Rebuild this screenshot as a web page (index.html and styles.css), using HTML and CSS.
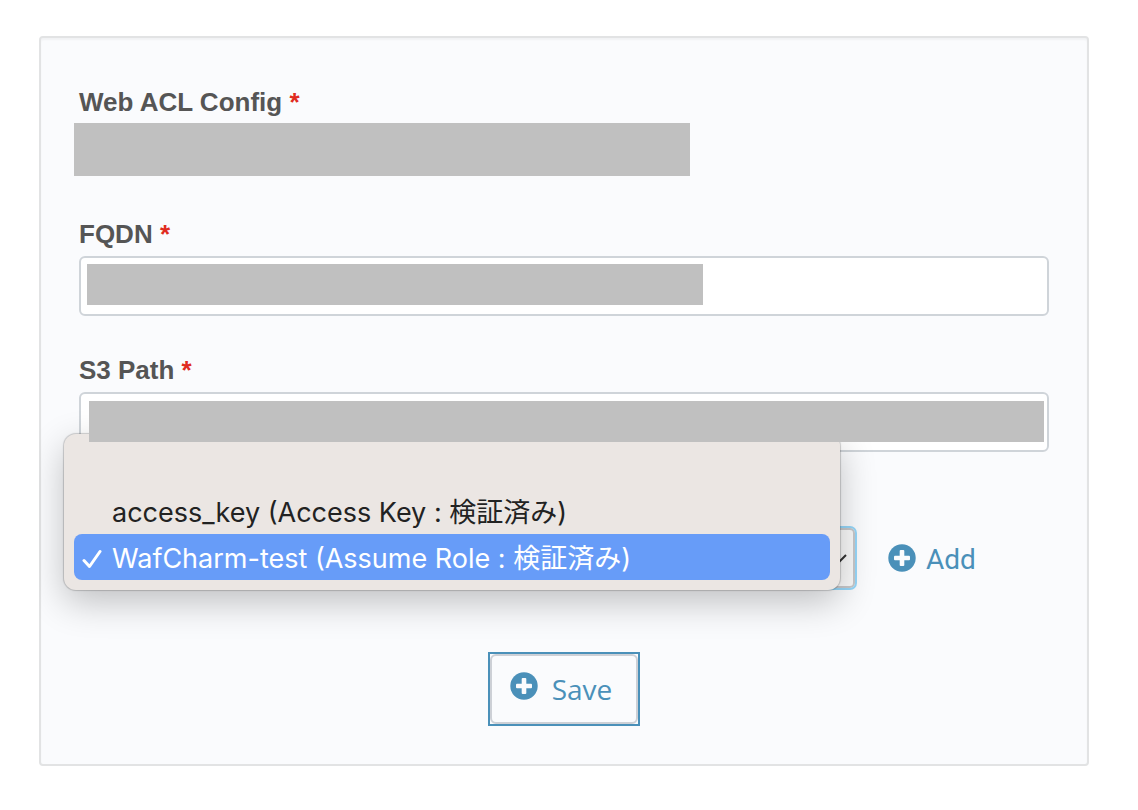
FILE: index.html
```
<!DOCTYPE html>
<html lang="ja">

<head>
    <meta charset="UTF-8">
    <meta name="viewport" content="width=device-width, initial-scale=1.0">
    <title>Web ACL Config</title>
    <link rel="stylesheet" href="styles.css">
</head>

<body>
    <form class="card">
        <div class="field">
            <div class="label">Web ACL Config <span class="required">*</span></div>
            <div class="masked-value"></div>
        </div>

        <div class="field">
            <label class="label" for="fqdn">FQDN <span class="required">*</span></label>
            <div class="control">
                <input type="text" id="fqdn" required>
                <span class="mask mask-fqdn"></span>
            </div>
        </div>

        <div class="field">
            <label class="label" for="s3-path">S3 Path <span class="required">*</span></label>
            <div class="control">
                <input type="text" id="s3-path" required>
                <span class="mask mask-path"></span>
            </div>
        </div>

        <div class="credential">
            <div class="select-wrap">
                <select aria-label="Credential">
                    <option></option>
                    <option>access_key (Access Key : 検証済み)</option>
                    <option selected>WafCharm-test (Assume Role : 検証済み)</option>
                </select>
                <svg class="arrow" viewBox="0 0 16 10" aria-hidden="true">
                    <path d="M1 1l7 7 7-7" />
                </svg>
                <ul class="menu" role="listbox" aria-label="Credential">
                    <li role="option" aria-selected="false"></li>
                    <li role="option" aria-selected="false">access_key (Access Key : 検証済み)</li>
                    <li class="selected" role="option" aria-selected="true">
                        <svg class="check" viewBox="0 0 20 20" aria-hidden="true">
                            <path d="M2 11.5L7.5 17.5L18 2.5" />
                        </svg>
                        WafCharm-test (Assume Role : 検証済み)
                    </li>
                </ul>
            </div>
            <a class="add" href="#">
                <svg class="plus" viewBox="0 0 28 28" aria-hidden="true">
                    <circle cx="14" cy="14" r="13.7" />
                    <rect x="6" y="11.7" width="16" height="4.6" rx="1" />
                    <rect x="11.7" y="6" width="4.6" height="16" rx="1" />
                </svg>
                <span>Add</span>
            </a>
        </div>

        <button class="save" type="submit">
            <svg class="plus" viewBox="0 0 28 28" aria-hidden="true">
                <circle cx="14" cy="14" r="13.7" />
                <rect x="6" y="11.7" width="16" height="4.6" rx="1" />
                <rect x="11.7" y="6" width="4.6" height="16" rx="1" />
            </svg>
            <span>Save</span>
        </button>
    </form>
</body>

</html>
```

FILE: styles.css
```
* {
    box-sizing: border-box;
}

body {
    margin: 36px 49px 44px 39px;
    background-color: #fff;
    font-family: "Liberation Sans", Arial, sans-serif;
}

.card {
    padding: 48px 38px 38px;
    border: 2px solid #e2e3e4;
    border-radius: 4px;
    background-color: #fafbfd;
    box-shadow: inset 0 2px 2px rgba(0, 0, 0, 0.04);
}

.field {
    margin-bottom: 38px;
}

.label {
    display: block;
    margin-bottom: 6px;
    color: #555;
    font-size: 26px;
    font-weight: bold;
    line-height: 32px;
}

.required {
    color: #e02b20;
}

.masked-value {
    width: 616px;
    max-width: 100%;
    height: 53px;
    margin: -1px 0 42px -5px;
    background-color: #c0c0c0;
}

.control {
    position: relative;
}

.control input {
    display: block;
    width: 100%;
    height: 60px;
    padding: 0 16px;
    border: 2px solid #cfd4d9;
    border-radius: 6px;
    background-color: #fff;
    font-size: 26px;
}

.mask {
    position: absolute;
    height: 41px;
    background-color: #c0c0c0;
}

.mask-fqdn {
    top: 8px;
    left: 8px;
    width: 616px;
}

/* stays above the open menu */
.mask-path {
    top: 9px;
    left: 10px;
    right: 5px;
    z-index: 2;
}

.credential {
    display: flex;
    align-items: center;
    gap: 33px;
    margin: 76px 0 64px;
}

.select-wrap {
    position: relative;
    flex: 0 1 776px;
}

select {
    display: block;
    width: 100%;
    height: 60px;
    padding: 0 16px;
    appearance: none;
    border: 2px solid #c8c8ca;
    border-radius: 5px;
    outline: 2px solid #96d6f8;
    background-color: #fafafa;
    color: #333;
    font-size: 26px;
}

.arrow {
    position: absolute;
    top: 26px;
    right: 8px;
    width: 16px;
    height: 10px;
    fill: none;
    stroke: #333;
    stroke-width: 2;
}

.menu {
    position: absolute;
    top: -94px;
    left: -15px;
    right: 15px;
    z-index: 1;
    margin: 0;
    padding: 8px 10px 10px;
    border-radius: 12px;
    background-color: #ebe6e3;
    box-shadow: 0 0 1px 1px rgba(0, 0, 0, 0.18), 0 12px 36px rgba(0, 0, 0, 0.24);
    color: #222;
    font-family: Inter, "Noto Sans CJK JP", sans-serif;
    font-size: 27px;
    line-height: 46px;
    list-style: none;
}

.menu li {
    position: relative;
    height: 46px;
    padding: 2px 0 0 38px;
    border-radius: 8px;
    white-space: nowrap;
}

.menu .selected {
    background-color: #679cf8;
    color: #fff;
}

.check {
    position: absolute;
    top: 15px;
    left: 8px;
    width: 20px;
    height: 20px;
    fill: none;
    stroke: #fff;
    stroke-width: 3;
    stroke-linecap: round;
    stroke-linejoin: round;
}

.add {
    display: flex;
    align-items: center;
    gap: 10px;
    color: #4a90b9;
    font-family: Roboto, sans-serif;
    font-size: 28px;
    line-height: 36px;
    text-decoration: none;
}

.add span {
    padding-top: 3px;
}

.plus {
    width: 28px;
    height: 28px;
    fill: #4a90b9;
}

.plus rect {
    fill: #fafbfd;
}

.save {
    position: relative;
    display: flex;
    justify-content: center;
    gap: 14px;
    width: 152px;
    height: 74px;
    margin: 0 auto;
    padding: 18px 6px 0 0;
    border: 2px solid #4a90b9;
    background-color: #fafbfd;
    color: #4a90b9;
    font-family: "Open Sans", sans-serif;
    font-size: 28px;
    line-height: 34px;
}

/* rounded frame inside the square focus ring */
.save::before {
    content: "";
    position: absolute;
    inset: 0;
    border: 2px solid #cdd0d6;
    border-radius: 6px;
}
```
